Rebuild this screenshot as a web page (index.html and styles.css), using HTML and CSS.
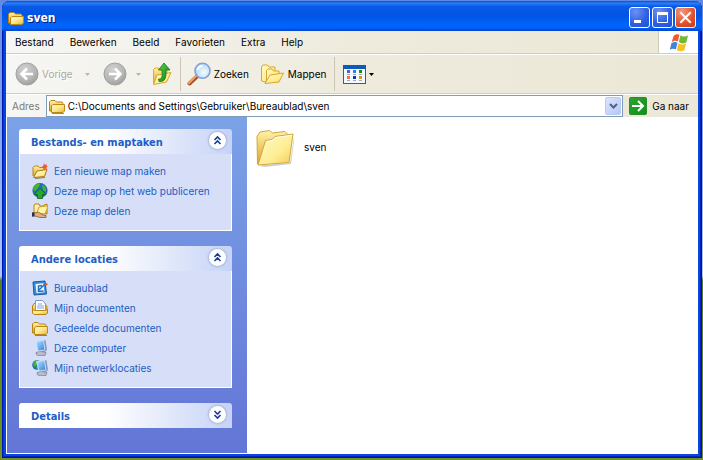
FILE: index.html
```html
<!DOCTYPE html>
<html lang="nl">
<head>
<meta charset="utf-8">
<title>sven</title>
<link rel="stylesheet" href="styles.css">
</head>
<body>
<svg class="defs" aria-hidden="true">
  <defs>
    <linearGradient id="gold" x1="0" y1="0" x2="1" y2="1"><stop offset="0" stop-color="#fffbcf"/><stop offset=".5" stop-color="#fde88c"/><stop offset="1" stop-color="#e9b536"/></linearGradient>
    <linearGradient id="goldBack" x1="0" y1="0" x2="0" y2="1"><stop offset="0" stop-color="#fff3a8"/><stop offset="1" stop-color="#dda52a"/></linearGradient>
    <linearGradient id="goldLight" x1="0" y1="0" x2="1" y2="1"><stop offset="0" stop-color="#fffbc8"/><stop offset=".6" stop-color="#feed94"/><stop offset="1" stop-color="#f4cc50"/></linearGradient>
    <radialGradient id="grey" cx=".4" cy=".3" r=".8"><stop offset="0" stop-color="#d2d2d2"/><stop offset=".6" stop-color="#b6b6b6"/><stop offset="1" stop-color="#979797"/></radialGradient>
    <radialGradient id="lens" cx=".6" cy=".6" r=".7"><stop offset="0" stop-color="#f4fdff"/><stop offset="1" stop-color="#9fd4f8"/></radialGradient>
    <linearGradient id="green" x1="0" y1="0" x2="1" y2="1"><stop offset="0" stop-color="#5fd04c"/><stop offset="1" stop-color="#0b8214"/></linearGradient>
    <linearGradient id="screen" x1="0" y1="0" x2="1" y2="1"><stop offset="0" stop-color="#b9e6ff"/><stop offset="1" stop-color="#2a7fe0"/></linearGradient>
    <symbol id="folder" viewBox="0 0 16 16">
      <path d="M.5 13V4L2 2.500h4L7.500 4H13l1 1.500V13z" fill="url(#goldBack)" stroke="#b98215"/>
      <path d="M2.500 14.500V8L4 6.500h11.500V13l-1.500 1.500z" fill="url(#gold)" stroke="#bd8818"/>
      <path d="M3 15.500h12" stroke="#76571a" stroke-opacity=".7"/>
    </symbol>
    <symbol id="pc" viewBox="0 0 16 16">
      <path d="M4 12.500l5-1.500 5 1.500-1 3-6 .3-2.500-1z" fill="#b9bccb" stroke="#75788e" stroke-width=".7"/>
      <path d="M5 1l8.500-.7L15 10l-3 2.500-6-1.500z" fill="#8294ba"/>
      <path d="M3.500 1.500l8-1 1.500 9.500-7 1z" fill="url(#screen)" stroke="#dceeff" stroke-width=".8"/>
    </symbol>
  </defs>
</svg>

<div class="window">
  <header class="titlebar">
    <svg class="icon16" viewBox="0 0 16 16"><use href="#folder"/></svg>
    <h1>sven</h1>
    <div class="controls">
      <button class="ctl" aria-label="Minimaliseren"><svg viewBox="0 0 19 19"><path d="M4 12h7v3H4z" fill="#fff"/></svg></button>
      <button class="ctl" aria-label="Maximaliseren"><svg viewBox="0 0 19 19"><path d="M4.500 5v9.500h10V5" fill="none" stroke="#fff"/><path d="M4 4h11v3H4z" fill="#fff"/></svg></button>
      <button class="ctl close" aria-label="Sluiten"><svg viewBox="0 0 19 19"><path d="M5 5l9 9M14 5l-9 9" stroke="#fff" stroke-width="2" stroke-linecap="square"/></svg></button>
    </div>
  </header>

  <div class="frame">
    <nav class="menubar">
      <div class="menus">
        <button>Bestand</button><button>Bewerken</button><button>Beeld</button><button>Favorieten</button><button>Extra</button><button>Help</button>
      </div>
      <div class="brand">
        <svg viewBox="0 0 20 19">
          <path d="M4.500 3.200C6.500 1 8.500 .7 10.500 1.800L8.800 8.600C7 7.500 5.200 7.500 2.700 9.200z" fill="#ee5a2b"/>
          <path d="M11.500 2.300c2.300 1.500 4.200 1.700 7.500.2L17.300 9.400c-3 1.600-5.200 1.300-7.500-.3z" fill="#71b83a"/>
          <path d="M2.400 10.300C5 8.600 6.800 8.600 8.500 9.800L6.900 16.500C5 15.300 3.200 15.400.8 16.800z" fill="#3f83df"/>
          <path d="M9.500 10.300c2.300 1.500 4.500 1.700 7.500.3l-1.600 6.600c-3 1.600-5.200 1.300-7.500-.3z" fill="#f5bf26"/>
        </svg>
      </div>
    </nav>

    <div class="toolbar">
      <button class="tool back" disabled>
        <svg width="24" height="24" viewBox="0 0 24 24"><circle cx="12" cy="12" r="11" fill="url(#grey)" stroke="#a2a2a2"/><path d="M18 12H7M12 6.500L6.500 12l5.500 5.500" fill="none" stroke="#fff" stroke-width="2.600"/></svg>
        <span>Vorige</span>
      </button>
      <button class="drop wide" disabled aria-label="Vorige pagina's"><svg width="5" height="3" viewBox="0 0 5 3"><path d="M0 0h5L2.500 3z" fill="currentColor"/></svg></button>
      <button class="tool" disabled aria-label="Volgende">
        <svg width="24" height="24" viewBox="0 0 24 24"><circle cx="12" cy="12" r="11" fill="url(#grey)" stroke="#a2a2a2"/><path d="M6 12h11M12 6.500l5.500 5.500-5.500 5.500" fill="none" stroke="#fff" stroke-width="2.600"/></svg>
      </button>
      <button class="drop" disabled aria-label="Volgende pagina's"><svg width="5" height="3" viewBox="0 0 5 3"><path d="M0 0h5L2.500 3z" fill="currentColor"/></svg></button>
      <button class="tool up" aria-label="Omhoog">
        <svg width="20" height="24" viewBox="0 0 20 24"><path d="M1.500 21.500V7.500L3 6h3.500L8 8h7v5" fill="url(#goldBack)" stroke="#e3ab28"/><path d="M1.500 22.500L5 13l14-2.500-4.500 9.500z" fill="url(#goldLight)" stroke="#dda626"/><path d="M6.500 17c3.500.3 4-2 3.500-9H6.500L12 1l6 7h-4c.5 8-1 12-7 11.500z" fill="url(#green)" stroke="#16761a" stroke-width=".8"/></svg>
      </button>
      <span class="sep"></span>
      <button class="tool">
        <svg width="24" height="24" viewBox="0 0 24 24"><path d="M2.500 21.500l8-7.500" stroke="#a74f26" stroke-width="4" stroke-linecap="round"/><path d="M2 21l7-7" stroke="#f2a568" stroke-width="2" stroke-linecap="round"/><circle cx="15.500" cy="8.800" r="7.500" fill="url(#lens)" stroke="#8b9edb" stroke-width="1.600"/><path d="M10.500 8c.6-2.500 2.400-4 5-4" fill="none" stroke="#fff" stroke-width="2"/></svg>
        <span>Zoeken</span>
      </button>
      <button class="tool folders">
        <svg width="24" height="22" viewBox="0 0 24 22"><path d="M.5 18V4L2 2h4.500L8 4h6v4L4 19z" fill="url(#goldLight)" stroke="#dca628"/><path d="M5.500 18.500V7.500L7 6h4l1.500 2H18v4" fill="url(#goldLight)" stroke="#dca628"/><path d="M4 20.500l5-8.500 13.500-2L18 19z" fill="url(#goldLight)" stroke="#dca628"/></svg>
        <span>Mappen</span>
      </button>
      <span class="sep"></span>
      <button class="tool views" aria-label="Weergaven">
        <svg width="23" height="19" viewBox="0 0 23 19"><rect x=".5" y=".5" width="22" height="18" fill="#f1f8ff" stroke="#1763bd"/><path d="M0 0h23v4H0z" fill="#0d59bd"/><path d="M4 5h3v3H4z" fill="#6259b8"/><path d="M10 5h3v3h-3z" fill="#2580f0"/><path d="M16 5h3v3h-3z" fill="#0a970b"/><path d="M4 11h3v3H4z" fill="#ff7143"/><path d="M10 11h3v3h-3z" fill="#083b9c"/><path d="M16 11h3v3h-3z" fill="#d2a00c"/><path d="M4 9h3v1H4zm6 0h3v1h-3zm6 0h3v1h-3zM4 15h3v1H4zm6 0h3v1h-3zm6 0h3v1h-3z" fill="#a8a8a8"/></svg>
        <svg width="5" height="3" viewBox="0 0 5 3"><path d="M0 0h5L2.500 3z"/></svg>
      </button>
    </div>

    <form class="address">
      <label for="path">Adres</label>
      <div class="combo">
        <svg class="icon16" viewBox="0 0 16 16"><use href="#folder"/></svg>
        <input id="path" type="text" value="C:\Documents and Settings\Gebruiker\Bureaublad\sven">
        <button type="button" class="combo-arrow" aria-label="Adreslijst"><svg width="9" height="6" viewBox="0 0 9 6"><path d="M1 1l3.500 3.500L8 1" fill="none" stroke="#4d6185" stroke-width="2"/></svg></button>
      </div>
      <button type="button" class="go">
        <svg width="18" height="18" viewBox="0 0 18 18"><rect x=".5" y=".5" width="17" height="17" rx="1" fill="url(#green)" stroke="#23902a"/><rect x="1" y="1" width="16" height="16" fill="#169322" fill-opacity=".7"/><path d="M3 9h11M9 4l5 5-5 5" fill="none" stroke="#fff" stroke-width="2"/></svg>
        <span>Ga naar</span>
      </button>
    </form>

    <main class="content">
      <aside class="tasks">
        <section class="panel">
          <h2>Bestands- en maptaken
            <button class="toggle" aria-label="Inklappen"><svg width="17" height="17" viewBox="0 0 17 17"><path d="M5.500 8l3-3 3 3M5.500 12l3-3 3 3" fill="none" stroke="#173e91" stroke-width="1.600"/></svg></button>
          </h2>
          <ul>
            <li><a href="#"><svg class="icon16" viewBox="0 0 16 16"><path d="M1 13V4.500L2.500 3H6l1.500 1.500H12V8" fill="url(#goldBack)" stroke="#b98215"/><path d="M1.500 14.500L5 8l10-1.500-2.500 7z" fill="url(#goldLight)" stroke="#a9781a"/><path d="M3 15.500l10-1" stroke="#6b4c16" stroke-opacity=".7"/><path d="M12.500 0l.8 2L15 1l-.6 2 1.600.6-1.700.9.5 2-2-1-1.300 1 .2-2-2-.8 1.700-.8-.2-1.700 1.200.8z" fill="#f0552a"/></svg>Een nieuwe map maken</a></li>
            <li><a href="#"><svg class="icon16" viewBox="0 0 16 16"><circle cx="8" cy="7.500" r="7.200" fill="#216cc0" stroke="#174a84" stroke-width=".6"/><path d="M2 3c3-3 6-3 6-1L6 5 3 8 1 7zm8-1c3 0 5 4 4 7l-3-2z" fill="#45b52c"/><path d="M8 5.500l6 6h-3.500v4h-5v-4H2z" fill="#25a82b" stroke="#0b651a" stroke-width=".8"/></svg>Deze map op het web publiceren</a></li>
            <li><a href="#"><svg class="icon16" viewBox="0 0 16 16"><path d="M2 10V2l1-1h4l1 2h4V2l3-1v10z" fill="url(#gold)" stroke="#b58119"/><path d="M5 10l2-6 9-1-3 8z" fill="#fff3a5" stroke="#c69529" stroke-width=".8"/><path d="M0 10h3l3-1 5 3 3 .5v2H8L3 13H0z" fill="#e4ad7d" stroke="#76502d" stroke-width=".7"/><path d="M0 9.500h2.500v4H0z" fill="#292f4f"/></svg>Deze map delen</a></li>
          </ul>
        </section>

        <section class="panel">
          <h2>Andere locaties
            <button class="toggle" aria-label="Inklappen"><svg width="17" height="17" viewBox="0 0 17 17"><path d="M5.500 8l3-3 3 3M5.500 12l3-3 3 3" fill="none" stroke="#173e91" stroke-width="1.600"/></svg></button>
          </h2>
          <ul>
            <li><a href="#"><svg class="icon16" viewBox="0 0 16 16"><path d="M1 2l12-1 1.500 13L2 15z" fill="#378bdc" stroke="#155b9f"/><path d="M3.500 4l8-.7 1 9-8 1z" fill="#e8f6ff"/><path d="M10 5.500L6.500 6v5.500l5-.5M7 10l6-6" fill="none" stroke="#256cb6" stroke-width="1.400"/><path d="M12 5l2-2 2 1-2 2z" fill="#ef5325"/></svg>Bureaublad</a></li>
            <li><a href="#"><svg class="icon16" viewBox="0 0 16 16"><path d="M.5 13V6L2 3.500h11l2 3.500v6z" fill="url(#goldBack)" stroke="#b98215"/><path d="M3.500 11V.5h7L13.500 4v7z" fill="#fff" stroke="#7e9ac2"/><path d="M6 4h4M5 6h7M5 8h7" stroke="#7aa5df"/><path d="M.5 13V9.500l2 1h11l2-1V13L14 14.500H2z" fill="url(#gold)" stroke="#b98215"/></svg>Mijn documenten</a></li>
            <li><a href="#"><svg class="icon16" viewBox="0 0 16 16"><use href="#folder"/></svg>Gedeelde documenten</a></li>
            <li><a href="#"><svg class="icon16" viewBox="0 0 16 16"><use href="#pc" width="16" height="16"/></svg>Deze computer</a></li>
            <li><a href="#"><svg class="icon16" viewBox="0 0 16 16"><circle cx="5" cy="5" r="4.800" fill="#216cc0"/><path d="M1 3c3-4 6-2 5 0L4 6 2 7zm3 4l4-2v4H5z" fill="#45b52c"/><use href="#pc" x="1" width="16" height="16"/></svg>Mijn netwerklocaties</a></li>
          </ul>
        </section>

        <section class="panel">
          <h2>Details
            <button class="toggle" aria-label="Uitklappen"><svg width="17" height="17" viewBox="0 0 17 17"><path d="M5.500 5l3 3 3-3M5.500 9l3 3 3-3" fill="none" stroke="#173e91" stroke-width="1.600"/></svg></button>
          </h2>
        </section>
      </aside>

      <div class="files">
        <a class="file" href="#">
          <svg width="40" height="40" viewBox="0 0 40 40">
            <path d="M4 38.500l31-2.500 4-26v4l-3 23-27 3z" fill="#555" fill-opacity=".3"/>
            <path d="M2.500 37L2 9.500 5 5l9.500-1.500L17.500 6 30 4.500l3 3v22z" fill="url(#goldBack)" stroke="#d3a63a"/>
            <path d="M3 38L10.500 13.500l6.500-1 3-3L38 7l-4 28.500z" fill="url(#goldLight)" stroke="#d3a63a"/>
            <path d="M11.500 14.500l6-1 3-3L37 8.300" fill="none" stroke="#fffde8"/>
          </svg>
          <span>sven</span>
        </a>
      </div>
    </main>
  </div>
</div>
</body>
</html>
```
FILE: styles.css
```css
* { box-sizing: border-box; }

body {
  margin: 0;
  padding: 1px 1px 2px 2px;
  min-height: 100vh;
  display: flex;
  background: linear-gradient(#6189e3, #a9c7fa 60%, #587d1d 61%, #6d9424);
  font: 10px/16px Inter, "Noto Sans", sans-serif;
  color: #000;
}

.defs { position: absolute; width: 0; height: 0; }

button, input {
  font: inherit;
  color: inherit;
  margin: 0;
  padding: 0;
  border: 0;
  background: none;
}

svg { display: block; flex: none; }
.icon16 { width: 16px; height: 16px; }

.window {
  flex: 1;
  display: flex;
  flex-direction: column;
  padding: 0 4px 4px;
  border-radius: 8px 8px 0 0;
  background: #0846dc;
  box-shadow: inset 1px 0 #0019b5, inset -1px -1px #00129a, inset 2px 0 #0831d9, inset -2px -2px #0022bb;
}

/* Title bar */
.titlebar {
  display: flex;
  align-items: center;
  gap: 3px;
  height: 30px;
  margin: 0 -4px;
  padding: 3px 6px 0;
  border-radius: 8px 8px 0 0;
  background: linear-gradient(#0a4bd0, #2a80f8 7%, #0a5ae8 18%, #0054e3 45%, #0064fa 78%, #0062f8 90%, #0043cc);
}
.titlebar h1 {
  flex: 1;
  margin: 0;
  font: bold 12px/18px "DejaVu Sans Condensed", sans-serif;
  color: #fff;
  text-shadow: 1px 1px #0a1883;
}
.controls { display: flex; gap: 2px; }
.ctl {
  width: 21px;
  height: 21px;
  border: 1px solid #fff;
  border-radius: 3px;
  background: radial-gradient(circle at 30% 20%, #6b92f3, #2c5de2 60%, #2150d0);
}
.ctl.close { background: radial-gradient(circle at 30% 20%, #f0997f, #e0512b 60%, #c73c12); }

.frame {
  flex: 1;
  display: flex;
  flex-direction: column;
  background: linear-gradient(90deg, #f6f6f4, #eeebdd 50%, #ebe8d7);
}

/* Menu bar */
.menubar {
  display: flex;
  height: 23px;
  border-bottom: 1px solid #d2cebe;
}
.menus { flex: 1; display: flex; align-items: center; gap: 16px; padding-left: 9px; }
.brand {
  display: flex;
  justify-content: center;
  align-items: center;
  width: 40px;
  border-left: 1px solid #cfcab8;
  background: #fff;
}
.brand svg { width: 20px; height: 19px; }

/* Toolbar */
.toolbar {
  display: flex;
  align-items: center;
  height: 40px;
  padding-left: 9px;
  border-top: 1px solid #fff;
  border-bottom: 1px solid #d2cebe;
}
.tool { display: flex; align-items: center; gap: 3px; }
.tool:disabled { color: #aca899; text-shadow: 1px 1px #fff; }
.drop { width: 24px; display: flex; justify-content: center; color: #b9b6a9; }
.drop.wide { width: 30px; }
.up { margin-left: 1px; }
.sep { width: 1px; height: 34px; margin: 0 6px 0 8px; background: #cbc6b1; }
.folders { margin-left: 12px; }
.views { margin-left: 2px; }

/* Address bar */
.address {
  display: flex;
  align-items: center;
  gap: 6px;
  height: 23px;
  padding: 0 9px 0 6px;
  border-top: 1px solid #fff;
}
.address label { color: #7b7a70; }
.combo {
  flex: 1;
  display: flex;
  align-items: center;
  gap: 3px;
  height: 22px;
  padding: 0 1px 0 2px;
  border: 1px solid #7f9db9;
  background: #fff;
}
.combo input { flex: 1; min-width: 0; height: 18px; outline: 0; }
.combo-arrow {
  display: flex;
  align-items: center;
  justify-content: center;
  width: 16px;
  height: 18px;
  border: 1px solid #b9cbf5;
  border-radius: 2px;
  background: linear-gradient(135deg, #dae5fd, #b4c9f6);
}
.go { display: flex; align-items: center; gap: 5px; }

/* Content */
.content {
  flex: 1;
  display: flex;
  border-left: 1px solid #fff;
  border-bottom: 1px solid #fff;
  background: #fff;
}
.tasks {
  width: 240px;
  display: flex;
  flex-direction: column;
  gap: 15px;
  padding: 12px 15px 24px 12px;
  background: linear-gradient(#7ba2e7, #6375d6);
}
.panel h2 {
  display: flex;
  align-items: flex-end;
  justify-content: space-between;
  height: 25px;
  margin: 0;
  padding: 0 6px 3px 12px;
  border-radius: 3px 3px 0 0;
  background: linear-gradient(90deg, #fff 40%, #c6d3f7);
  font: bold 11px/16px "DejaVu Sans Condensed", sans-serif;
  color: #215dc6;
}
.toggle {
  align-self: flex-start;
  width: 17px;
  height: 17px;
  margin-top: 3px;
  border-radius: 50%;
  background: #fff;
  box-shadow: 0 0 2px 1px #a9b5d8;
}
.panel ul {
  margin: 0;
  padding: 7px 12px 9px;
  border: 1px solid #fff;
  border-top: 0;
  background: #d6dff7;
  list-style: none;
}
.panel li a {
  display: flex;
  align-items: center;
  gap: 6px;
  height: 20px;
  color: #215dc6;
  text-decoration: none;
}

.files { flex: 1; padding: 10px 8px; }
.file {
  display: inline-flex;
  align-items: center;
  gap: 9px;
  color: #000;
  text-decoration: none;
}
```
